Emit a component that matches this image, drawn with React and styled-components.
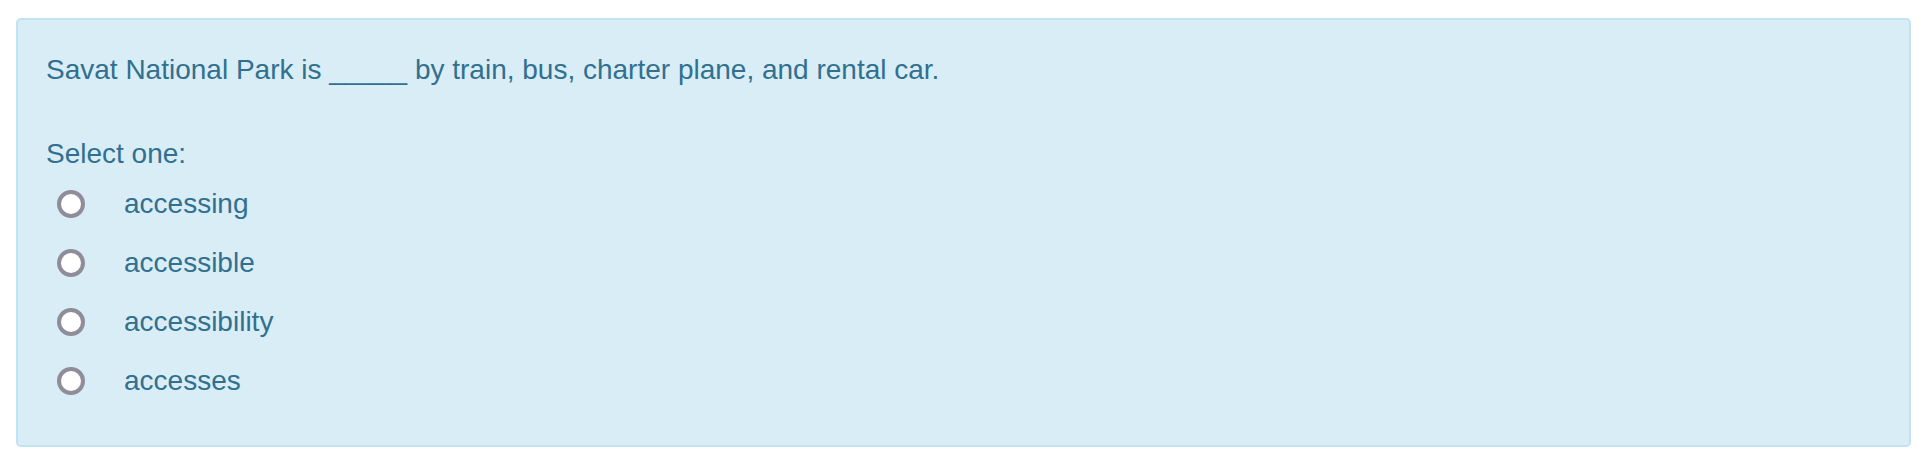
import React from "react";
import styled, { createGlobalStyle } from "styled-components";

const options = ["accessing", "accessible", "accessibility", "accesses"];

const App = () => {
  return (
    <>
      <GlobalStyle />
      <Page>
        <Formulation>
          <QuestionText>
            Savat National Park is _____ by train, bus, charter plane, and
            rental car.
          </QuestionText>
          <Prompt>Select one:</Prompt>
          <Answers>
            {options.map((opt) => (
              <Option key={opt}>
                <Radio type="radio" name="answer" />
                <OptionLabel>{opt}</OptionLabel>
              </Option>
            ))}
          </Answers>
        </Formulation>
      </Page>
    </>
  );
};

const GlobalStyle = createGlobalStyle`
  body {
    margin: 0;
    background: #ffffff;
    font-family: "Liberation Sans", Arial, sans-serif;
  }
`;

const Page = styled.div`
  padding: 18px 19px 12px 16px;
`;

const Formulation = styled.div`
  box-sizing: border-box;
  height: 429px;
  padding: 30px 29px 0 28px;
  background: #d9edf7;
  border: 2px solid #bfe3f3;
  border-radius: 5px;
  color: #31708f;
  font-size: 28px;
  line-height: 40px;
`;

const QuestionText = styled.div`
  margin-bottom: 44px;
`;

const Prompt = styled.div`
  margin-bottom: 10px;
`;

const Answers = styled.div`
  display: flex;
  flex-direction: column;
  gap: 19px;
`;

const Option = styled.label`
  display: flex;
  align-items: center;
  height: 40px;
`;

const Radio = styled.input`
  appearance: none;
  box-sizing: border-box;
  width: 28px;
  height: 28px;
  margin: 0 39px 0 11px;
  border: 4px solid #8f8d9a;
  border-radius: 50%;
  background: #ffffff;
  flex-shrink: 0;
`;

const OptionLabel = styled.span`
  color: #31708f;
`;

export default App;
